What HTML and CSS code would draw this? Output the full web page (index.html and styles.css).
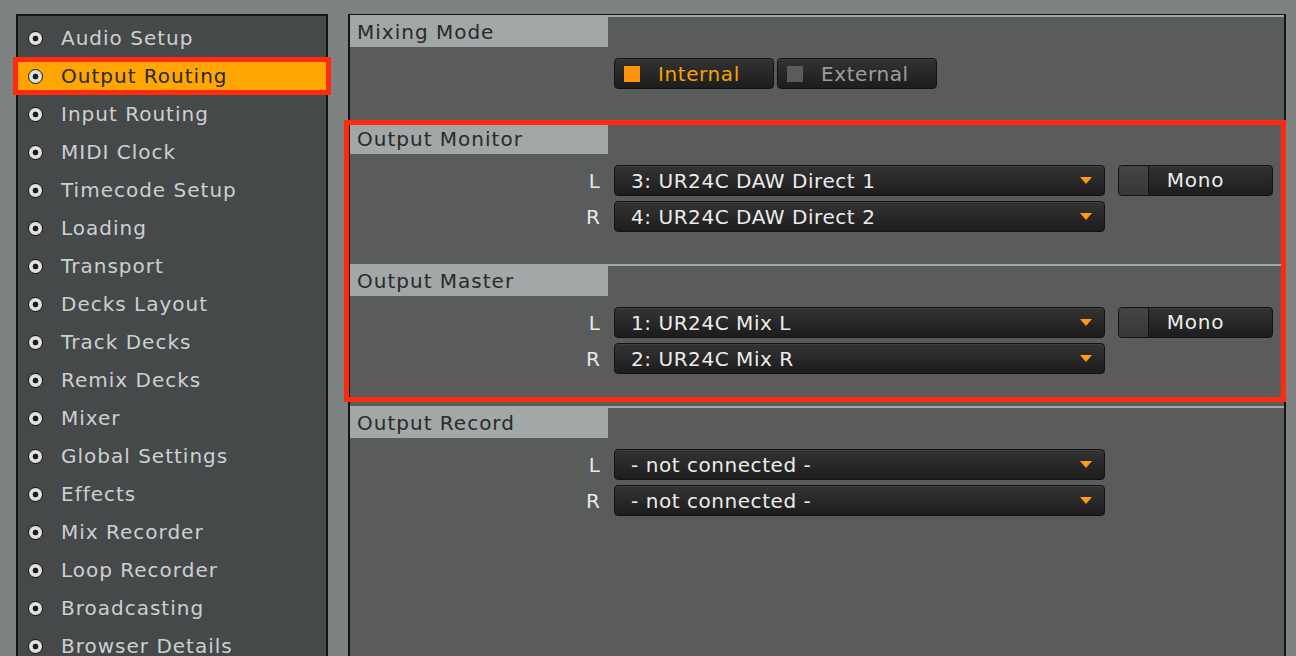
FILE: index.html
```html
<!DOCTYPE html>
<html lang="en">
<head>
    <meta charset="UTF-8">
    <meta name="viewport" content="width=device-width, initial-scale=1.0">
    <title>Preferences - Output Routing</title>
    <link rel="stylesheet" href="styles.css">
</head>
<body>
    <div class="prefs">
        <nav class="sidebar">
            <div class="nav-item"><span class="bullet"></span><span>Audio Setup</span></div>
            <div class="nav-item active"><span class="bullet"></span><span>Output Routing</span></div>
            <div class="nav-item"><span class="bullet"></span><span>Input Routing</span></div>
            <div class="nav-item"><span class="bullet"></span><span>MIDI Clock</span></div>
            <div class="nav-item"><span class="bullet"></span><span>Timecode Setup</span></div>
            <div class="nav-item"><span class="bullet"></span><span>Loading</span></div>
            <div class="nav-item"><span class="bullet"></span><span>Transport</span></div>
            <div class="nav-item"><span class="bullet"></span><span>Decks Layout</span></div>
            <div class="nav-item"><span class="bullet"></span><span>Track Decks</span></div>
            <div class="nav-item"><span class="bullet"></span><span>Remix Decks</span></div>
            <div class="nav-item"><span class="bullet"></span><span>Mixer</span></div>
            <div class="nav-item"><span class="bullet"></span><span>Global Settings</span></div>
            <div class="nav-item"><span class="bullet"></span><span>Effects</span></div>
            <div class="nav-item"><span class="bullet"></span><span>Mix Recorder</span></div>
            <div class="nav-item"><span class="bullet"></span><span>Loop Recorder</span></div>
            <div class="nav-item"><span class="bullet"></span><span>Broadcasting</span></div>
            <div class="nav-item"><span class="bullet"></span><span>Browser Details</span></div>
        </nav>

        <main class="panel">
            <section class="group first">
                <div class="group-title">Mixing Mode</div>
                <div class="group-body">
                    <div class="mode-row">
                        <div class="mode-btn on"><span class="led"></span>Internal</div>
                        <div class="mode-btn"><span class="led"></span>External</div>
                    </div>
                </div>
            </section>

            <div class="highlight">
                <section class="group">
                    <div class="group-title">Output Monitor</div>
                    <div class="group-body">
                        <div class="channel-row">
                            <span class="ch-label">L</span>
                            <div class="select"><span>3: UR24C DAW Direct 1</span><span class="arrow"></span></div>
                            <div class="mono"><span class="check"></span><span class="mono-label">Mono</span></div>
                        </div>
                        <div class="channel-row">
                            <span class="ch-label">R</span>
                            <div class="select"><span>4: UR24C DAW Direct 2</span><span class="arrow"></span></div>
                        </div>
                    </div>
                </section>

                <section class="group">
                    <div class="group-title">Output Master</div>
                    <div class="group-body">
                        <div class="channel-row">
                            <span class="ch-label">L</span>
                            <div class="select"><span>1: UR24C Mix L</span><span class="arrow"></span></div>
                            <div class="mono"><span class="check"></span><span class="mono-label">Mono</span></div>
                        </div>
                        <div class="channel-row">
                            <span class="ch-label">R</span>
                            <div class="select"><span>2: UR24C Mix R</span><span class="arrow"></span></div>
                        </div>
                    </div>
                </section>
            </div>

            <section class="group">
                <div class="group-title">Output Record</div>
                <div class="group-body">
                    <div class="channel-row">
                        <span class="ch-label">L</span>
                        <div class="select"><span>- not connected -</span><span class="arrow"></span></div>
                    </div>
                    <div class="channel-row">
                        <span class="ch-label">R</span>
                        <div class="select"><span>- not connected -</span><span class="arrow"></span></div>
                    </div>
                </div>
            </section>
        </main>
    </div>
</body>
</html>
```

FILE: styles.css
```css
html, body {
    margin: 0;
    padding: 0;
    height: 656px;
    overflow: hidden;
    background-color: #7e8282;
    font-family: "DejaVu Sans", "Liberation Sans", sans-serif;
}

.prefs {
    display: flex;
    gap: 20px;
    height: 656px;
    padding: 14px 10px 0 16px;
    box-sizing: border-box;
}

/* left navigation */
.sidebar {
    width: 312px;
    box-sizing: border-box;
    border: 2px solid #151515;
    border-bottom: none;
    background-color: #46494a;
    padding-top: 8px;
    display: flex;
    flex-direction: column;
    gap: 10px;
}

.nav-item {
    display: flex;
    align-items: center;
    gap: 18px;
    height: 28px;
    flex: none;
    padding-left: 10px;
    color: #cdd0d0;
    font-size: 20px;
    letter-spacing: 1px;
    white-space: nowrap;
}

.nav-item.active {
    background-color: #ffa602;
    color: #2a2a2a;
    box-shadow: 0 0 0 5px #ff2b0c;
}

.bullet {
    width: 13px;
    height: 13px;
    flex: none;
    border-radius: 50%;
    border: 1px solid #151515;
    background: radial-gradient(circle, #1c1c1c 0 2.6px, #e0e0e0 3.2px 100%);
}

/* right panel */
.panel {
    width: 938px;
    box-sizing: border-box;
    border: 2px solid #151515;
    border-top-width: 1px;
    border-bottom: none;
    background-color: #5a5c5b;
}

.group {
    border-top: 2px solid #a2a7a7;
}

.group-title {
    width: 258px;
    height: 30px;
    box-sizing: border-box;
    padding-left: 7px;
    line-height: 30px;
    background-color: #a2a7a7;
    color: #2a2a2a;
    font-size: 20px;
    letter-spacing: 1px;
}

.group-body {
    padding: 11px 0 32px;
    display: flex;
    flex-direction: column;
    gap: 5px;
}

.group.first .group-body {
    padding-bottom: 33px;
}

.highlight {
    position: relative;
}

.highlight::after {
    content: "";
    position: absolute;
    top: -2px;
    left: -6px;
    right: -2px;
    bottom: 4px;
    border: 5px solid #ff2b0c;
    pointer-events: none;
}

/* mixing mode buttons */
.mode-row {
    display: flex;
    gap: 3px;
    padding-left: 264px;
}

.mode-btn {
    width: 160px;
    height: 31px;
    box-sizing: border-box;
    display: flex;
    align-items: center;
    gap: 18px;
    padding-left: 9px;
    border: 1px solid #121212;
    border-radius: 4px;
    background: linear-gradient(#323232, #1d1d1d);
    box-shadow: inset 0 1px 0 rgba(255, 255, 255, 0.06);
    color: #9c9f9f;
    font-size: 20px;
    letter-spacing: 0.6px;
}

.mode-btn.on {
    color: #f6a300;
}

.led {
    width: 16px;
    height: 16px;
    flex: none;
    background-color: #5b5b5b;
}

.mode-btn.on .led {
    background-color: #ff9410;
}

/* channel rows */
.channel-row {
    display: flex;
    align-items: center;
    height: 31px;
}

.ch-label {
    width: 250px;
    margin-right: 14px;
    text-align: right;
    color: #e8e8e8;
    font-size: 20px;
}

.select {
    width: 491px;
    height: 31px;
    box-sizing: border-box;
    display: flex;
    align-items: center;
    justify-content: space-between;
    padding: 0 12px 0 16px;
    border: 1px solid #121212;
    border-radius: 4px;
    background: linear-gradient(#343434, #1c1c1c);
    box-shadow: inset 0 1px 0 rgba(255, 255, 255, 0.06);
    color: #ececec;
    font-size: 20px;
    letter-spacing: 0.55px;
    white-space: nowrap;
}

.arrow {
    width: 0;
    height: 0;
    border-left: 6px solid transparent;
    border-right: 6px solid transparent;
    border-top: 7px solid #ff9a12;
}

.mono {
    width: 155px;
    height: 31px;
    margin-left: 13px;
    box-sizing: border-box;
    display: flex;
    border: 1px solid #121212;
    border-radius: 4px;
    background: linear-gradient(#323232, #1d1d1d);
    box-shadow: inset 0 1px 0 rgba(255, 255, 255, 0.06);
    overflow: hidden;
}

.check {
    width: 29px;
    flex: none;
    border-right: 1px solid #141414;
    background: linear-gradient(#444, #383838);
}

.mono-label {
    flex: 1;
    padding-right: 30px;
    text-align: center;
    line-height: 29px;
    color: #ececec;
    font-size: 20px;
    letter-spacing: 0.8px;
}
```
